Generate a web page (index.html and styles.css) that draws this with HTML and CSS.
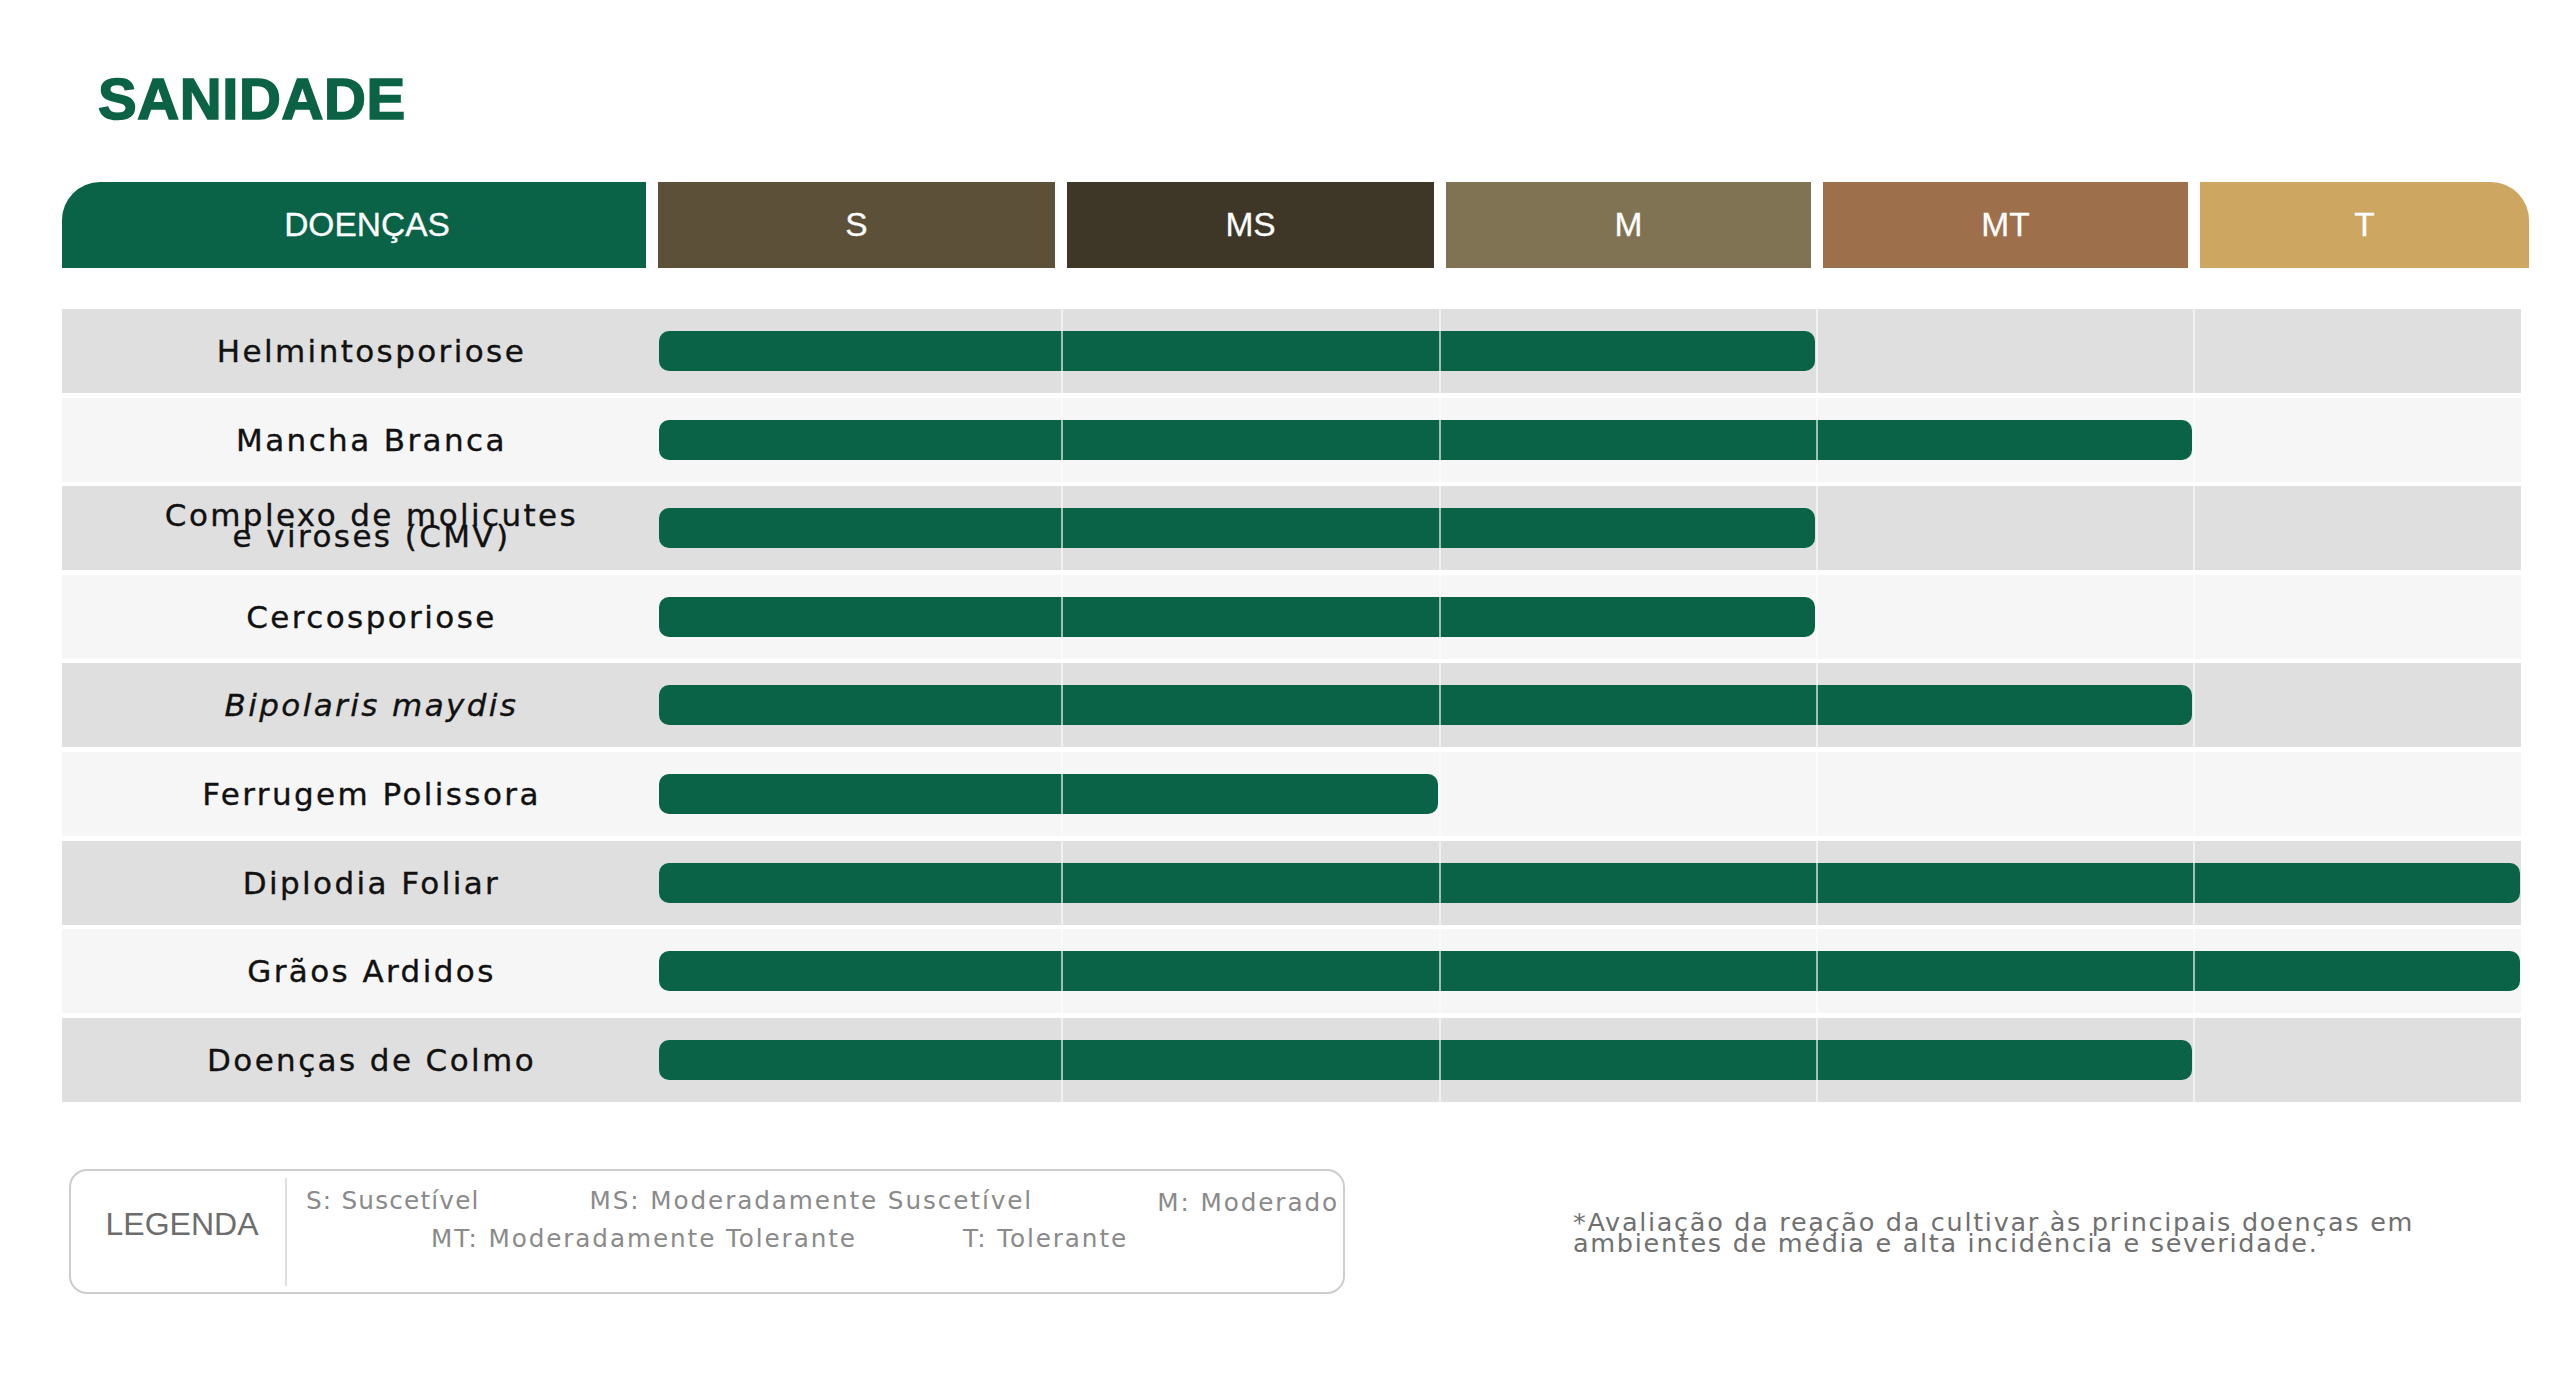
FILE: index.html
```html
<!DOCTYPE html>
<html lang="pt-BR">
<head>
<meta charset="utf-8">
<title>Sanidade</title>
<link rel="stylesheet" href="styles.css">
</head>
<body>
<main class="page">
  <h1 class="title">SANIDADE</h1>

  <div class="head">
    <div class="hcell h-doencas">DOENÇAS</div>
    <div class="hcell h-s">S</div>
    <div class="hcell h-ms">MS</div>
    <div class="hcell h-m">M</div>
    <div class="hcell h-mt">MT</div>
    <div class="hcell h-t">T</div>
  </div>

  <div class="rows">
    <div class="row">
      <div class="label">Helmintosporiose</div>
      <div class="track"><div class="bar span-3"></div><i class="line c1"></i><i class="line c2"></i><i class="line c3"></i><i class="line c4"></i></div>
    </div>
    <div class="row">
      <div class="label">Mancha Branca</div>
      <div class="track"><div class="bar span-4"></div><i class="line c1"></i><i class="line c2"></i><i class="line c3"></i><i class="line c4"></i></div>
    </div>
    <div class="row">
      <div class="label two">Complexo de molicutes<br>e viroses (CMV)</div>
      <div class="track"><div class="bar span-3"></div><i class="line c1"></i><i class="line c2"></i><i class="line c3"></i><i class="line c4"></i></div>
    </div>
    <div class="row">
      <div class="label">Cercosporiose</div>
      <div class="track"><div class="bar span-3"></div><i class="line c1"></i><i class="line c2"></i><i class="line c3"></i><i class="line c4"></i></div>
    </div>
    <div class="row">
      <div class="label"><em>Bipolaris maydis</em></div>
      <div class="track"><div class="bar span-4"></div><i class="line c1"></i><i class="line c2"></i><i class="line c3"></i><i class="line c4"></i></div>
    </div>
    <div class="row">
      <div class="label">Ferrugem Polissora</div>
      <div class="track"><div class="bar span-2"></div><i class="line c1"></i><i class="line c2"></i><i class="line c3"></i><i class="line c4"></i></div>
    </div>
    <div class="row">
      <div class="label">Diplodia Foliar</div>
      <div class="track"><div class="bar span-5"></div><i class="line c1"></i><i class="line c2"></i><i class="line c3"></i><i class="line c4"></i></div>
    </div>
    <div class="row">
      <div class="label">Grãos Ardidos</div>
      <div class="track"><div class="bar span-5"></div><i class="line c1"></i><i class="line c2"></i><i class="line c3"></i><i class="line c4"></i></div>
    </div>
    <div class="row">
      <div class="label">Doenças de Colmo</div>
      <div class="track"><div class="bar span-4"></div><i class="line c1"></i><i class="line c2"></i><i class="line c3"></i><i class="line c4"></i></div>
    </div>
  </div>

  <div class="bottom">
    <div class="legend">
      <div class="legend-title">LEGENDA</div>
      <div class="legend-divider"></div>
      <div class="legend-items">
        <div class="legend-row first">
          <span class="short">S: Suscetível</span>
          <span class="ms-item">MS: Moderadamente Suscetível</span>
          <span class="m-item">M: Moderado</span>
        </div>
        <div class="legend-row second">
          <span>MT: Moderadamente Tolerante</span>
          <span>T: Tolerante</span>
        </div>
      </div>
    </div>
    <p class="note">*Avaliação da reação da cultivar às principais doenças em<br>ambientes de média e alta incidência e severidade.</p>
  </div>
</main>
</body>
</html>
```

FILE: styles.css
```css
html, body {
  margin: 0;
  padding: 0;
  background: #ffffff;
}

.page {
  width: 2560px;
  height: 1376px;
  box-sizing: border-box;
  padding: 70px 0 0 62px;
  font-family: "DejaVu Sans", "Liberation Sans", sans-serif;
  color: #111111;
}

.title {
  margin: 0 0 54px 36px;
  font-family: "Liberation Sans", Arial, sans-serif;
  font-weight: 900;
  font-size: 58px;
  line-height: 58px;
  letter-spacing: 0.6px;
  color: #0b6245;
  -webkit-text-stroke: 1.6px #0b6245;
}

/* header */
.head {
  display: flex;
  gap: 12px;
  height: 86px;
  margin-bottom: 41px;
}

.hcell {
  display: flex;
  align-items: center;
  justify-content: center;
  color: #ffffff;
  font-family: "Liberation Sans", Arial, sans-serif;
  font-size: 33.5px;
  -webkit-text-stroke: 0.3px #ffffff;
  box-sizing: border-box;
}

.h-doencas { width: 584px; background: #0a6347; border-top-left-radius: 38px; padding-left: 26px; }
.h-s { width: 397px; background: #5c5039; }
.h-ms { width: 367px; background: #3e3727; }
.h-m { width: 365px; background: #807353; }
.h-mt { width: 365px; background: #9e6f4b; }
.h-t { width: 329px; background: #cda661; border-top-right-radius: 38px; }

/* rows */
.rows {
  display: flex;
  flex-direction: column;
  gap: 4.6px;
  width: 2459px;
}

.row {
  display: flex;
  height: 84px;
  background: #dfdfdf;
}

.row:nth-child(even) { background: #f6f6f6; }

.label {
  width: 597px;
  box-sizing: border-box;
  padding-left: 22px;
  display: flex;
  align-items: center;
  justify-content: center;
  text-align: center;
  font-size: 31px;
  letter-spacing: 2.4px;
  -webkit-text-stroke: 0.35px #111111;
  white-space: nowrap;
}

.label.two {
  line-height: 21px;
  padding-bottom: 4px;
}

.label em {
  font-style: oblique;
}

.track {
  flex: 1;
  display: grid;
  grid-template-columns: 403px 378px 377px 377px 327px;
  align-items: center;
}

.bar {
  grid-row: 1;
  grid-column-start: 1;
  height: 40px;
  border-radius: 10px;
  background: #0a6347;
  margin-right: 2px;
}

.span-2 { grid-column-end: span 2; }
.span-3 { grid-column-end: span 3; }
.span-4 { grid-column-end: span 4; }
.span-5 { grid-column-end: span 5; margin-right: 1px; }

.line {
  grid-row: 1;
  align-self: stretch;
  justify-self: end;
  width: 2px;
  margin-right: -1px;
  background: rgba(255, 255, 255, 0.6);
  z-index: 1;
}

.c1 { grid-column: 1; }
.c2 { grid-column: 2; }
.c3 { grid-column: 3; }
.c4 { grid-column: 4; }

/* bottom */
.bottom {
  display: flex;
  align-items: flex-start;
  margin-top: 67px;
  padding-left: 7px;
}

.legend {
  display: flex;
  width: 1276px;
  height: 125px;
  box-sizing: border-box;
  border: 2px solid #cdcdcd;
  border-radius: 18px;
}

.legend-title {
  width: 214px;
  box-sizing: border-box;
  padding: 0 0 14px 8px;
  display: flex;
  align-items: center;
  justify-content: center;
  font-family: "Liberation Sans", Arial, sans-serif;
  font-size: 32px;
  color: #6d6d6d;
}

.legend-divider {
  width: 2px;
  margin: 7px 0 6px;
  background: #dedede;
}

.legend-items {
  flex: 1;
  padding: 11px 4px 0 19px;
  display: flex;
  flex-direction: column;
  font-size: 24.7px;
  line-height: 38px;
  letter-spacing: 1.9px;
  color: #8a8a8a;
  white-space: nowrap;
}

.legend-row {
  display: flex;
}

.legend-row.second {
  padding-left: 125px;
  gap: 106px;
}

.short {
  letter-spacing: 1.2px;
}

.ms-item {
  margin-left: 110px;
}

.m-item {
  margin-left: auto;
  position: relative;
  top: 2px;
}

.note {
  margin: 43px 0 0 228px;
  font-size: 25.5px;
  line-height: 21px;
  letter-spacing: 1.7px;
  color: #707070;
  white-space: nowrap;
}
```
